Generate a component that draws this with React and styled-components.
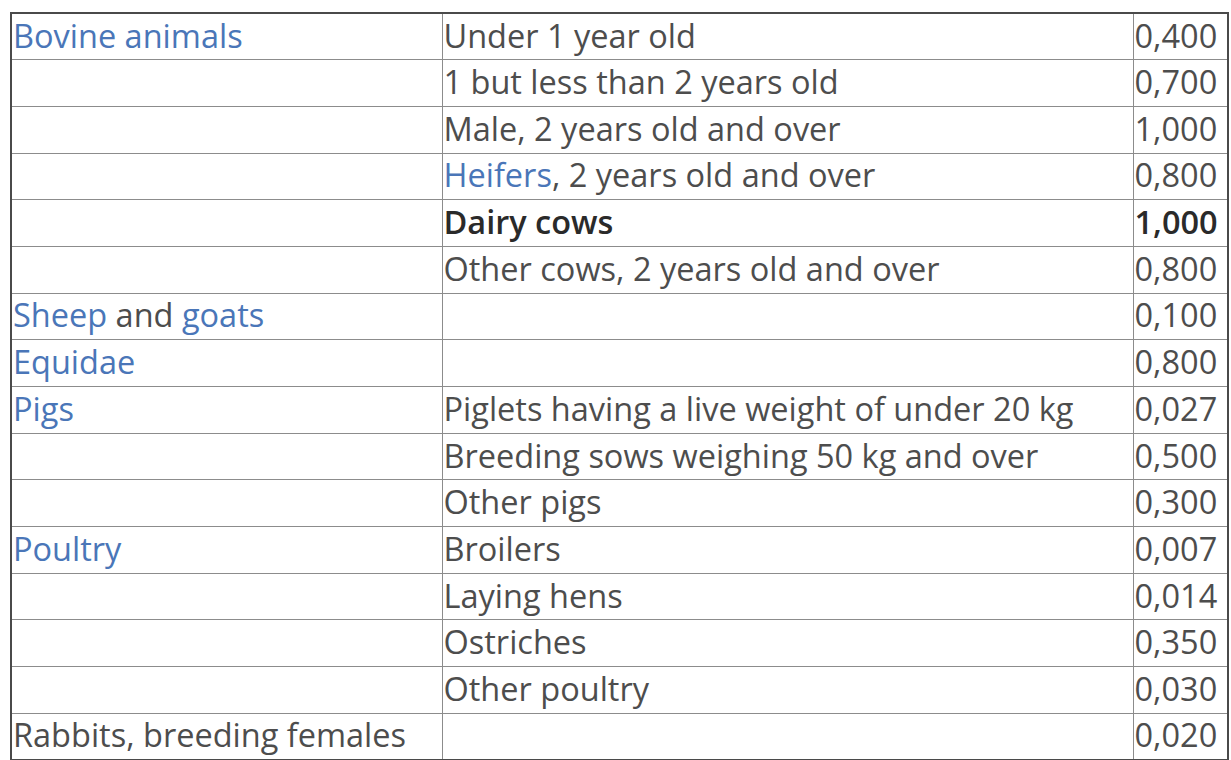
import React from 'react';
import styled, { createGlobalStyle } from 'styled-components';

const GlobalStyle = createGlobalStyle`
    body {
        margin: 0;
        background: #fff;
        font-family: "Open Sans", "Liberation Sans", sans-serif;
    }
`;

const rows = [
    { group: [{ text: 'Bovine animals', link: true }], kind: 'Under 1 year old', value: '0,400' },
    { kind: '1 but less than 2 years old', value: '0,700' },
    { kind: 'Male, 2 years old and over', value: '1,000' },
    { kind: [{ text: 'Heifers', link: true }, { text: ', 2 years old and over' }], value: '0,800' },
    { kind: 'Dairy cows', value: '1,000', bold: true },
    { kind: 'Other cows, 2 years old and over', value: '0,800' },
    { group: [{ text: 'Sheep', link: true }, { text: ' and ' }, { text: 'goats', link: true }], value: '0,100' },
    { group: [{ text: 'Equidae', link: true }], value: '0,800' },
    { group: [{ text: 'Pigs', link: true }], kind: 'Piglets having a live weight of under 20 kg', value: '0,027' },
    { kind: 'Breeding sows weighing 50 kg and over', value: '0,500' },
    { kind: 'Other pigs', value: '0,300' },
    { group: [{ text: 'Poultry', link: true }], kind: 'Broilers', value: '0,007' },
    { kind: 'Laying hens', value: '0,014' },
    { kind: 'Ostriches', value: '0,350' },
    { kind: 'Other poultry', value: '0,030' },
    { group: [{ text: 'Rabbits, breeding females' }], value: '0,020' },
];

// a cell's content is either plain text or a list of text / link parts
const renderParts = (parts) => {
    if (!parts) return null;
    if (typeof parts === 'string') return parts;
    return parts.map((p, i) => (p.link ? <Link key={i} href="#">{p.text}</Link> : <span key={i}>{p.text}</span>));
};

const App = () => {
    return (
        <Page>
            <GlobalStyle />
            <Table>
                <colgroup>
                    <col style={{ width: 431 }} />
                    <col style={{ width: 691 }} />
                    <col style={{ width: 95 }} />
                </colgroup>
                <tbody>
                    {rows.map((row, i) => (
                        <Row key={i}>
                            <Cell>{renderParts(row.group)}</Cell>
                            <Cell bold={row.bold}>{renderParts(row.kind)}</Cell>
                            <Cell bold={row.bold}>{row.value}</Cell>
                        </Row>
                    ))}
                </tbody>
            </Table>
        </Page>
    );
};

const Page = styled.div`
    padding: 12px 0 0 10px;
`;

const Table = styled.table`
    width: 1217px;
    table-layout: fixed;
    border-collapse: collapse;
    border: 2px solid #4a4a4a;
`;

const Row = styled.tr`
    height: 46.7px;
`;

const Cell = styled.td`
    border: 1px solid #8c8c8c;
    padding: 0 0 2px 1px;
    font-size: 32.5px;
    line-height: 42px;
    color: ${({ bold }) => (bold ? '#2a2a2a' : '#4d4d4d')};
    font-weight: ${({ bold }) => (bold ? 600 : 400)};
    white-space: nowrap;
    overflow: hidden;
    vertical-align: middle;
`;

const Link = styled.a`
    color: #4a76b8;
    text-decoration: none;
`;

export default App;
